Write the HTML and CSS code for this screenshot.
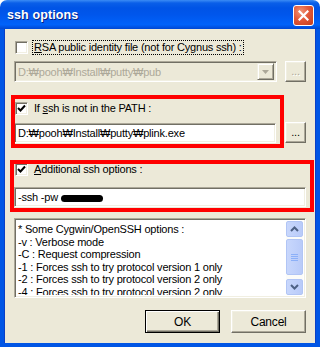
FILE: index.html
```html
<!DOCTYPE html>
<html lang="en">
<head>
    <meta charset="UTF-8">
    <title>ssh options</title>
    <link rel="stylesheet" href="styles.css">
</head>
<body>
    <div class="window">
        <div class="titlebar">
            <span class="title">ssh options</span>
            <span class="close">
                <svg width="11" height="11" viewBox="0 0 11 11"><path d="M1.5 1.5 L9.5 9.5 M9.5 1.5 L1.5 9.5" stroke="#fff" stroke-width="2.2" stroke-linecap="square"/></svg>
            </span>
        </div>

        <div class="client">
            <div class="check-row row-rsa">
                <span class="checkbox"></span>
                <span class="label focus"><u>R</u>SA public identity file (not for Cygnus ssh) :</span>
            </div>
            <div class="field-row row-pub">
                <div class="combo">
                    <span class="field-text">D:₩pooh₩Install₩putty₩pub</span>
                    <span class="combo-btn">
                        <svg width="7" height="4" viewBox="0 0 7 4"><path d="M0 0 H7 L3.5 4 Z" fill="#aca899"/></svg>
                    </span>
                </div>
                <span class="btn browse disabled">...</span>
            </div>

            <div class="check-row row-path">
                <span class="checkbox checked">
                    <svg width="9" height="9" viewBox="0 0 9 9"><path d="M1 4 L3.5 6.5 L8 1.5" fill="none" stroke="#000" stroke-width="2"/></svg>
                </span>
                <span class="label">If <u>s</u>sh is not in the PATH :</span>
            </div>
            <div class="field-row row-plink">
                <div class="textbox plink">
                    <span class="field-text">D:₩pooh₩Install₩putty₩plink.exe</span>
                </div>
                <span class="btn browse">...</span>
            </div>

            <div class="check-row row-opts">
                <span class="checkbox checked">
                    <svg width="9" height="9" viewBox="0 0 9 9"><path d="M1 4 L3.5 6.5 L8 1.5" fill="none" stroke="#000" stroke-width="2"/></svg>
                </span>
                <span class="label"><u>A</u>dditional ssh options :</span>
            </div>
            <div class="textbox opts">
                <span class="field-text">-ssh -pw <span class="hidden-pw"></span></span>
            </div>

            <div class="listbox">
                <div class="list-lines">
                    <div>* Some Cygwin/OpenSSH options :</div>
                    <div>-v : Verbose mode</div>
                    <div>-C : Request compression</div>
                    <div>-1 : Forces ssh to try protocol version 1 only</div>
                    <div>-2 : Forces ssh to try protocol version 2 only</div>
                    <div>-4 : Forces ssh to try protocol version 2 only</div>
                </div>
                <div class="scrollbar">
                    <span class="sb-btn">
                        <svg width="9" height="6" viewBox="0 0 9 6"><path d="M1 5 L4.5 1.5 L8 5" fill="none" stroke="#4d6185" stroke-width="2"/></svg>
                    </span>
                    <span class="sb-thumb">
                        <svg width="7" height="8" viewBox="0 0 7 8"><path d="M0 1.5 H7 M0 3.5 H7 M0 5.5 H7 M0 7.5 H7" stroke="#8cb0f8" stroke-width="1"/></svg>
                    </span>
                    <span class="sb-btn down">
                        <svg width="9" height="6" viewBox="0 0 9 6"><path d="M1 1 L4.5 4.5 L8 1" fill="none" stroke="#4d6185" stroke-width="2"/></svg>
                    </span>
                </div>
            </div>

            <div class="actions">
                <span class="btn push default">OK</span>
                <span class="btn push">Cancel</span>
            </div>

            <!-- red annotation boxes drawn over the dialog -->
            <div class="mark mark-path"></div>
            <div class="mark mark-opts"></div>
        </div>
    </div>
</body>
</html>
```

FILE: styles.css
```css
* { box-sizing: border-box; margin: 0; padding: 0; }
body {
    background: #fff;
    font-family: "Liberation Sans", Arial, "DejaVu Sans", sans-serif;
    font-size: 11px;
    letter-spacing: -0.2px;
    color: #000;
}
.window {
    width: 320px;
    height: 347px;
    display: flex;
    flex-direction: column;
}
.titlebar {
    height: 29px;
    display: flex;
    align-items: center;
    justify-content: space-between;
    padding: 0 6px 0 7px;
    border-radius: 7px 7px 0 0;
    background: linear-gradient(to bottom, #3b8cf5 0, #0a5fe8 3px, #0054e6 8px, #0056ec 50%, #0062fa 85%, #0047d2 100%);
}
.title {
    color: #fff;
    font-family: "Liberation Sans", Arial, sans-serif;
    font-weight: bold;
    font-size: 12.5px;
    letter-spacing: 0.1px;
    text-shadow: 1px 1px #0a1f7c;
    margin-top: 1px;
}
.close {
    width: 21px;
    height: 21px;
    border: 1px solid #fff;
    border-radius: 3px;
    background: radial-gradient(circle at 35% 30%, #f09577 0, #e2593a 45%, #c43d1c 100%);
    display: flex;
    align-items: center;
    justify-content: center;
    margin-top: 2px;
}
.client {
    position: relative;
    flex: 1;
    background: #ece9d8;
    border: 4px solid #0055e5;
    border-top: none;
    box-shadow: inset 1px 0 #0a3fc6, inset -1px 0 #0a3fc6;
    padding: 10px 10px 0 7px;
    display: flex;
    flex-direction: column;
}
.check-row {
    height: 17px;
    display: flex;
    align-items: center;
    padding-left: 4px;
}
.checkbox {
    width: 13px;
    height: 13px;
    background: #fff;
    border-top: 1px solid #aca899;
    border-left: 1px solid #aca899;
    border-right: 1px solid #fff;
    border-bottom: 1px solid #fff;
    box-shadow: inset 1px 1px #716f64, inset -1px -1px #f1efe2;
    display: flex;
    align-items: center;
    justify-content: center;
    margin-right: 4px;
}
.label {
    padding: 1px 2px;
    line-height: 13px;
    white-space: nowrap;
}
.label.focus {
    outline: 1px dotted #000;
    outline-offset: -1px;
}
.row-path { margin-top: 18px; }
.row-opts { margin-top: 18px; }
.field-row {
    display: flex;
    justify-content: space-between;
    padding-left: 3px;
}
.row-pub { margin-top: 5px; }
.row-plink { margin-top: 5px; }
.combo, .textbox, .listbox {
    border-top: 1px solid #aca899;
    border-left: 1px solid #aca899;
    border-right: 1px solid #fff;
    border-bottom: 1px solid #fff;
    box-shadow: inset 1px 1px #716f64, inset -1px -1px #f1efe2;
    background: #fff;
}
.combo {
    width: 263px;
    height: 21px;
    display: flex;
    align-items: center;
    justify-content: space-between;
    background: #ece9d8;
    color: #aca899;
    padding: 0 2px 0 3px;
}
.combo-btn {
    width: 17px;
    height: 17px;
    border-top: 1px solid #f1efe2;
    border-left: 1px solid #f1efe2;
    border-right: 1px solid #716f64;
    border-bottom: 1px solid #716f64;
    box-shadow: inset 1px 1px #fff, inset -1px -1px #aca899;
    display: flex;
    align-items: center;
    justify-content: center;
}
.textbox {
    height: 20px;
    display: flex;
    align-items: center;
    padding: 0 3px;
    white-space: nowrap;
}
.textbox.plink {
    width: 262px;
    margin-top: 1px;
}
.textbox.opts {
    width: 292px;
    margin: 9px 0 0 3px;
}
.hidden-pw {
    display: inline-block;
    width: 42px;
    height: 7px;
    background: #000;
    border-radius: 4px;
    vertical-align: middle;
}
.btn {
    display: flex;
    align-items: center;
    justify-content: center;
    background: #ece9d8;
    border-top: 1px solid #fff;
    border-left: 1px solid #fff;
    border-right: 1px solid #716f64;
    border-bottom: 1px solid #716f64;
    box-shadow: inset -1px -1px #aca899, inset 1px 1px #f1efe2;
}
.browse {
    width: 21px;
    height: 21px;
    padding-bottom: 2px;
}
.browse.disabled {
    color: #aca899;
    text-shadow: 1px 1px #fff;
}
.listbox {
    width: 292px;
    height: 80px;
    margin: 11px 0 0 3px;
    padding: 2px;
    display: flex;
    overflow: hidden;
}
.list-lines {
    flex: 1;
    line-height: 12.6px;
    padding: 2px 0 0 1px;
    white-space: nowrap;
    overflow: hidden;
}
.scrollbar {
    width: 17px;
    background: #fcfcf9;
    display: flex;
    flex-direction: column;
    gap: 1px;
}
.sb-btn, .sb-thumb {
    display: flex;
    align-items: center;
    justify-content: center;
    background: linear-gradient(to right, #c8d7fc, #b9cbf9);
    border: 1px solid #b1c5f5;
    border-radius: 2px;
}
.sb-btn { height: 16px; }
.sb-btn.down { margin-top: auto; }
.sb-thumb {
    height: 36px;
    margin-top: 1px;
}
.actions {
    display: flex;
    justify-content: flex-end;
    gap: 11px;
    margin-top: 12px;
}
.push {
    width: 75px;
    height: 23px;
    font-size: 12px;
}
.push.default {
    outline: 1px solid #000;
    outline-offset: -1px;
    border-color: #000;
    box-shadow: inset 1px 1px #fff, inset -1px -1px #716f64, inset -2px -2px #aca899;
}
.mark {
    position: absolute;
    border: 4px solid #f00;
}
.mark-path {
    left: 7px;
    top: 66px;
    width: 273px;
    height: 53px;
}
.mark-opts {
    left: 6px;
    top: 131px;
    width: 304px;
    height: 52px;
}
```
